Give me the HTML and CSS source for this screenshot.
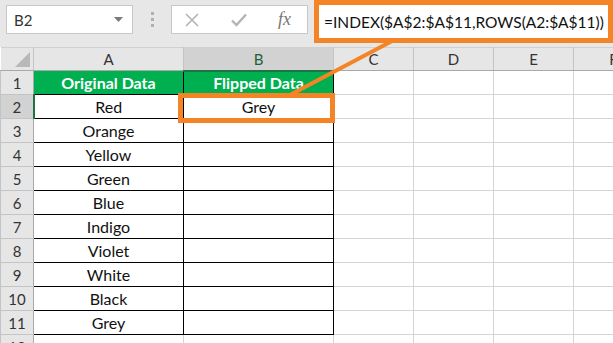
FILE: index.html
```html
<!DOCTYPE html>
<html lang="en">
<head>
    <title>Flip Data - INDEX ROWS</title>
    <link rel="stylesheet" href="styles.css">
</head>
<body>

<div class="sheet">

    <!-- Formula bar -->
    <div class="formula-bar">
        <div class="name-box">
            <span>B2</span>
            <svg class="caret" width="9" height="5" viewBox="0 0 9 5"><path d="M0 0h9L4.5 5z" fill="#7a7a7a"/></svg>
        </div>
        <div class="grip">
            <span></span><span></span><span></span>
        </div>
        <div class="fx-tools">
            <svg width="14" height="14" viewBox="0 0 14 14"><path d="M1 1l12 12M13 1L1 13" stroke="#b4b4b4" stroke-width="1.6" fill="none"/></svg>
            <svg width="16" height="14" viewBox="0 0 16 14"><path d="M1 7.5l4.5 4.5L15 1.5" stroke="#b4b4b4" stroke-width="2.4" fill="none"/></svg>
            <span class="fx">fx</span>
        </div>
        <div class="formula-input">=INDEX($A$2:$A$11,ROWS(A2:$A$11))</div>
    </div>

    <!-- Worksheet grid -->
    <table class="grid">
        <colgroup>
            <col class="c-row"><col class="c-wide"><col class="c-wide">
            <col class="c-std"><col class="c-std"><col class="c-std"><col class="c-std">
        </colgroup>
        <thead>
            <tr>
                <th class="corner"><span class="tri"></span></th>
                <th>A</th><th class="sel-col">B</th><th>C</th><th>D</th><th>E</th><th>F</th>
            </tr>
        </thead>
        <tbody id="rows"></tbody>
    </table>

    <!-- Callout: selected cell and link to formula -->
    <div class="callout-box"></div>
    <svg class="callout-line" width="613" height="343" viewBox="0 0 613 343">
        <line x1="394" y1="40" x2="288" y2="96" stroke="#f58426" stroke-width="4"/>
    </svg>
</div>

<script>
    const colors = ["Red", "Orange", "Yellow", "Green", "Blue", "Indigo", "Violet", "White", "Black", "Grey"];
    const body = document.getElementById('rows');

    // header row of the data
    let html = `<tr><td class="rowhead">1</td><td class="hd">Original Data</td><td class="hd">Flipped Data</td>
        <td></td><td></td><td></td><td></td></tr>`;

    colors.forEach((c, i) => {
        const n = i + 2;
        const flipped = n === 2 ? colors[colors.length - 1] : '';
        html += `<tr><td class="rowhead${n === 2 ? ' sel-row' : ''}">${n}</td>
            <td class="data">${c}</td><td class="data">${flipped}</td>
            <td></td><td></td><td></td><td></td></tr>`;
    });
    html += `<tr><td class="rowhead">12</td><td></td><td></td><td></td><td></td><td></td><td></td></tr>`;
    body.innerHTML = html;
</script>

</body>
</html>
```

FILE: styles.css
```css
* {
    margin: 0;
    padding: 0;
    box-sizing: border-box;
}

body {
    width: 613px;
    height: 343px;
    overflow: hidden;
    background: #fff;
    font-family: 'Lato', 'Liberation Sans', sans-serif;
}

.sheet {
    position: relative;
    width: 613px;
    height: 343px;
    overflow: hidden;
}

/* Formula bar */
.formula-bar {
    height: 47px;
    background: #e7e7e7;
    display: flex;
    align-items: flex-start;
    padding-left: 6px;
}

.name-box {
    margin-top: 5px;
    width: 127px;
    height: 29px;
    background: #fff;
    border: 1px solid #c8c8c8;
    display: flex;
    align-items: center;
    justify-content: space-between;
    padding: 0 9px 0 7px;
    font-size: 15px;
    color: #333;
}

.grip {
    width: 38px;
    height: 39px;
    display: flex;
    flex-direction: column;
    align-items: center;
    justify-content: center;
    gap: 3px;
}

.grip span {
    width: 3px;
    height: 3px;
    background: #b0b0b0;
}

.fx-tools {
    margin-top: 5px;
    width: 137px;
    height: 29px;
    background: #fff;
    border: 1px solid #c8c8c8;
    display: flex;
    align-items: center;
    justify-content: space-between;
    padding: 0 16px 0 13px;
}

.fx {
    font-family: 'Liberation Serif', serif;
    font-style: italic;
    font-size: 18px;
    color: #777;
}

.formula-input {
    margin-left: 6px;
    width: 299px;
    height: 43px;
    border: 5px solid #f58426;
    background: #fff;
    font-size: 15.5px;
    color: #111;
    display: flex;
    align-items: center;
    padding-left: 5px;
    white-space: nowrap;
    overflow: hidden;
}

/* Worksheet */
.grid {
    border-collapse: collapse;
    table-layout: fixed;
    width: 653px;
    font-size: 16px;
}

.c-row { width: 33px; }
.c-wide { width: 150px; }
.c-std { width: 80px; }

.grid th {
    height: 23px;
    background: #e6e6e6;
    font-weight: normal;
    color: #333;
    font-size: 15px;
    border-top: 1px solid #d0d0d0;
    border-left: 1px solid #c4c4c4;
    border-right: 1px solid #c4c4c4;
    border-bottom: 1px solid #a9a9a9;
}

.grid th.sel-col {
    background: #d2d2d2;
    border-bottom: 2px solid #217346;
    color: #1f5f3a;
}

.grid th.corner {
    position: relative;
    border-left: none;
}

.tri {
    position: absolute;
    right: 3px;
    bottom: 3px;
    width: 0;
    height: 0;
    border-left: 15px solid transparent;
    border-bottom: 15px solid #b8b8b8;
}

.grid td {
    height: 24px;
    border: 1px solid #d4d4d4;
    text-align: center;
    color: #111;
}

.grid td.rowhead {
    background: #e6e6e6;
    color: #333;
    font-size: 15px;
    border-color: #c4c4c4;
    border-right: 1px solid #a9a9a9;
}

.grid td.sel-row {
    background: #d2d2d2;
    border-right: 2px solid #217346;
}

.grid td.hd {
    background: #00b050;
    color: #fff;
    font-weight: bold;
    border: 1px solid #000;
}

.grid td.data {
    border: 1px solid #000;
}

/* Callout overlays */
.callout-box {
    position: absolute;
    left: 178px;
    top: 93px;
    width: 157px;
    height: 30px;
    border: 5px solid #f58426;
}

.callout-line {
    position: absolute;
    left: 0;
    top: 0;
    pointer-events: none;
}
```
